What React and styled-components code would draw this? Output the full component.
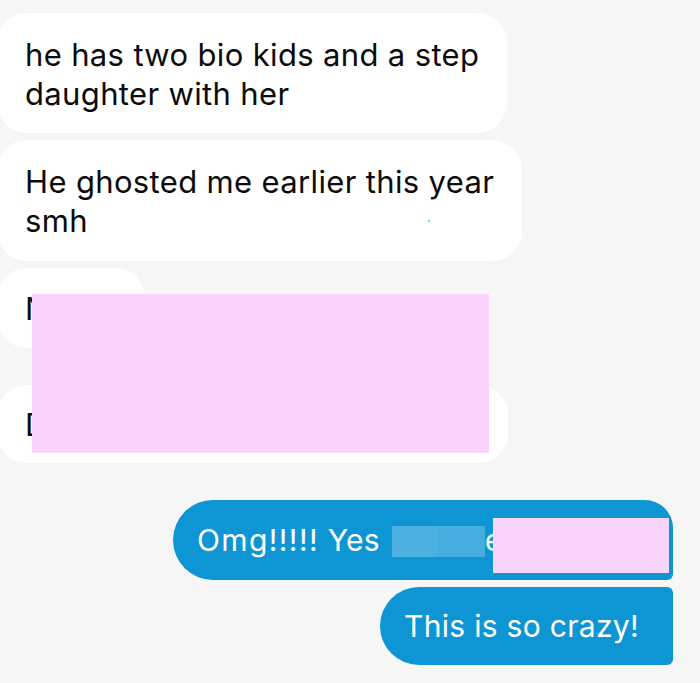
import React from "react";
import styled, { createGlobalStyle, css } from "styled-components";

const Global = createGlobalStyle`
  html, body { margin: 0; padding: 0; background: #f6f6f6; }
  body { font-family: Inter, "Noto Sans", "Liberation Sans", sans-serif; }
`;

const Thread = styled.div`
  width: 700px;
  height: 683px;
  overflow: hidden;
  padding-top: 13px;
  box-sizing: border-box;
  display: flex;
  flex-direction: column;
`;

const Group = styled.div`
  position: relative;
  display: flex;
  flex-direction: column;
  align-items: ${(p) => (p.$mine ? "flex-end" : "flex-start")};
  gap: 7px;
  margin-bottom: ${(p) => (p.$tight ? 7 : 37)}px;
  padding-right: ${(p) => (p.$mine ? "27px" : "0")};
`;

const Bubble = styled.div`
  position: relative;
  box-sizing: border-box;
  white-space: nowrap;
  height: ${(p) => p.$h}px;
  width: ${(p) => (p.$w ? `${p.$w}px` : "auto")};
  display: flex;
  align-items: center;
  ${(p) =>
    p.$mine
      ? css`
          font-size: 30px;
          line-height: 40px;
          letter-spacing: 0.3px;
          background: #0e96d4;
          color: #fff;
          padding: 0 24px;
          border-radius: 40px ${p.$tr}px 6px 40px;
        `
      : css`
          font-size: 31px;
          line-height: 39px;
          letter-spacing: 0.35px;
          background: #ffffff;
          color: #0b0b0b;
          padding: 1px 28px 0 28px;
          margin-left: -3px;
          border-radius: 30px;
        `}
`;

const Line = styled.span`
  display: block;
`;

const Wide = styled.span`
  letter-spacing: 1.4px;
`;

const Redact = styled.div`
  position: absolute;
  background: #f9d5fb;
  left: ${(p) => p.$x}px;
  top: ${(p) => p.$y}px;
  width: ${(p) => p.$w}px;
  height: ${(p) => p.$h}px;
`;

const Pixelated = styled.span`
  display: inline-block;
  width: 93px;
  height: 31px;
  margin-left: 3px;
  vertical-align: -6px;
  background: linear-gradient(90deg, #4cb1e1 0 48%, #46ade0 48% 100%);
`;

const Dot = styled.span`
  position: absolute;
  left: 431px;
  top: 80px;
  width: 2px;
  height: 2px;
  border-radius: 50%;
  background: #2fd0e8;
`;

export default function App() {
  return (
    <>
      <Global />
      <Thread>
        <Group $tight>
          <Bubble $h={120}>
            <Line>
              he has two bio kids and a step
              <br />
              daughter with her
            </Line>
          </Bubble>
          <Bubble $h={121}>
            <Line>
              He ghosted me earlier this year
              <br />
              smh
            </Line>
            <Dot />
          </Bubble>
        </Group>
        <Group>
          <Bubble $h={80} $w={148}>
            <Line>N</Line>
          </Bubble>
          <Bubble $h={78} $w={511} style={{ marginTop: 30 }}>
            <Line>D</Line>
          </Bubble>
          <Redact $x={32} $y={26} $w={457} $h={159} />
        </Group>
        <Group $mine>
          <Bubble $mine $tr={28} $h={80} $w={500}>
            <Line>
              <Wide>Omg!!!!!</Wide> Yes <Pixelated />e
            </Line>
            <Redact $x={320} $y={18} $w={176} $h={55} />
          </Bubble>
          <Bubble $mine $tr={6} $h={78} $w={293}>
            <Line>This is so crazy!</Line>
          </Bubble>
        </Group>
      </Thread>
    </>
  );
}
